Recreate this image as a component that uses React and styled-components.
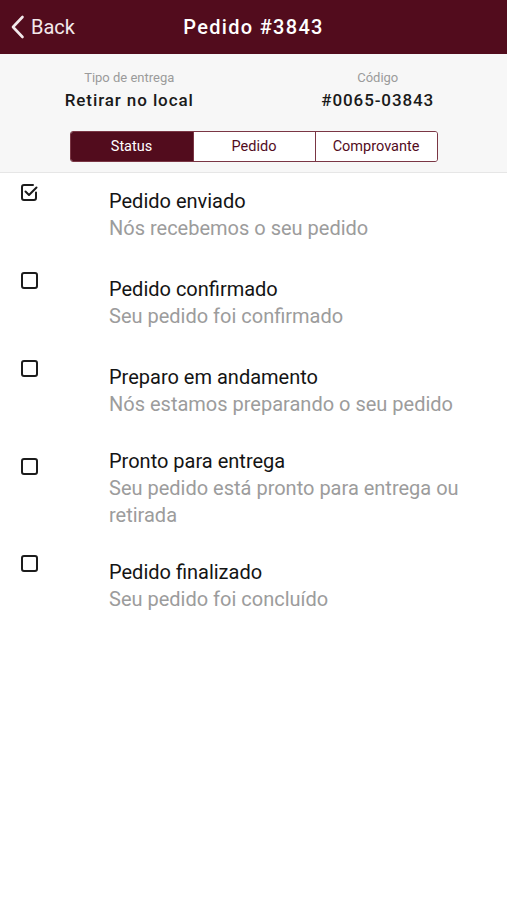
import React from "react";
import styled, { createGlobalStyle } from "styled-components";

const GlobalStyle = createGlobalStyle`
  body {
    margin: 0;
    background: #ffffff;
    font-family: Roboto, "Open Sans", sans-serif;
  }
`;

const Screen = styled.div`
  width: 507px;
  min-height: 900px;
  background: #ffffff;
`;

const TopBar = styled.header`
  height: 54px;
  background: #520c1d;
  display: grid;
  grid-template-columns: 1fr auto 1fr;
  align-items: center;
  color: #ffffff;
`;

const BackButton = styled.button`
  justify-self: start;
  display: flex;
  align-items: center;
  gap: 6px;
  padding: 0 0 0 11px;
  background: none;
  border: none;
  color: #f3e9eb;
  font-family: Roboto, sans-serif;
  font-size: 20px;
`;

const Title = styled.h1`
  margin: 0;
  font-size: 20px;
  font-weight: 500;
  letter-spacing: 1.3px;
`;

const InfoPanel = styled.section`
  background: #f7f7f7;
  border-bottom: 1px solid #e6e6e6;
  padding: 16px 5px 10px;
`;

const InfoGrid = styled.div`
  display: grid;
  grid-template-columns: 1fr 1fr;
`;

const InfoItem = styled.div`
  display: flex;
  flex-direction: column;
  align-items: center;
`;

const InfoLabel = styled.span`
  font-size: 13px;
  color: #9b9b9b;
  line-height: 16px;
`;

const InfoValue = styled.span`
  font-size: 17px;
  font-weight: 500;
  letter-spacing: 0.9px;
  color: #1a1a1a;
  line-height: 22px;
  margin-top: 3px;
`;

const Segmented = styled.div`
  display: grid;
  grid-template-columns: repeat(3, 1fr);
  width: 366px;
  margin: 20px auto 0;
  border: 1px solid #7a3644;
  border-radius: 3px;
  overflow: hidden;
`;

const Segment = styled.button`
  height: 29px;
  border: none;
  border-left: ${(p) => (p.$first ? "none" : "1px solid #7a3644")};
  background: ${(p) => (p.$active ? "#520c1d" : "#ffffff")};
  color: ${(p) => (p.$active ? "#ffffff" : "#520c1d")};
  font-family: Roboto, sans-serif;
  font-size: 14.5px;
  padding: 0;
`;

const StepList = styled.ul`
  list-style: none;
  margin: 0;
  padding: 10px 0 0;
  display: flex;
  flex-direction: column;
  gap: 25px;
`;

const Step = styled.li`
  display: flex;
  align-items: center;
`;

const CheckCol = styled.div`
  flex-shrink: 0;
  width: 109px;
  padding: 0 0 44px 20px;
  box-sizing: border-box;
  display: flex;
`;

const StepText = styled.div`
  display: flex;
  flex-direction: column;
  padding-right: 30px;
`;

const StepTitle = styled.span`
  font-size: 20px;
  line-height: 28px;
  color: #141414;
`;

const StepDesc = styled.span`
  font-size: 20px;
  line-height: 27px;
  color: #9c9c9c;
`;

const CheckBox = ({ checked }) => (
  <svg width="19" height="19" viewBox="0 0 19 19" fill="none" stroke="#1c1c1c" strokeWidth="2" strokeLinecap="round" strokeLinejoin="round">
    {checked ? (
      <>
        <path d="M16 9.5V15a2 2 0 0 1-2 2H4a2 2 0 0 1-2-2V4a2 2 0 0 1 2-2h9" />
        <path d="M5.5 8.5l3.5 3.5 7.5-7.5" />
      </>
    ) : (
      <rect x="2" y="2" width="15" height="15" rx="2" />
    )}
  </svg>
);

const steps = [
  { title: "Pedido enviado", desc: "Nós recebemos o seu pedido", done: true },
  { title: "Pedido confirmado", desc: "Seu pedido foi confirmado" },
  { title: "Preparo em andamento", desc: "Nós estamos preparando o seu pedido" },
  { title: "Pronto para entrega", desc: "Seu pedido está pronto para entrega ou retirada" },
  { title: "Pedido finalizado", desc: "Seu pedido foi concluído" },
];

const App = () => {
  return (
    <Screen>
      <GlobalStyle />
      <TopBar>
        <BackButton>
          <svg width="14" height="24" viewBox="0 0 14 24" fill="none" stroke="#f3e9eb" strokeWidth="2.6" strokeLinecap="round" strokeLinejoin="round">
            <path d="M11.5 2L2 12l9.5 10" />
          </svg>
          Back
        </BackButton>
        <Title>Pedido #3843</Title>
        <div />
      </TopBar>

      <InfoPanel>
        <InfoGrid>
          <InfoItem>
            <InfoLabel>Tipo de entrega</InfoLabel>
            <InfoValue>Retirar no local</InfoValue>
          </InfoItem>
          <InfoItem>
            <InfoLabel>Código</InfoLabel>
            <InfoValue>#0065-03843</InfoValue>
          </InfoItem>
        </InfoGrid>
        <Segmented>
          <Segment $first $active>Status</Segment>
          <Segment>Pedido</Segment>
          <Segment>Comprovante</Segment>
        </Segmented>
      </InfoPanel>

      <StepList>
        {steps.map((s) => (
          <Step key={s.title}>
            <CheckCol>
              <CheckBox checked={s.done} />
            </CheckCol>
            <StepText>
              <StepTitle>{s.title}</StepTitle>
              <StepDesc>{s.desc}</StepDesc>
            </StepText>
          </Step>
        ))}
      </StepList>
    </Screen>
  );
};

export default App;
